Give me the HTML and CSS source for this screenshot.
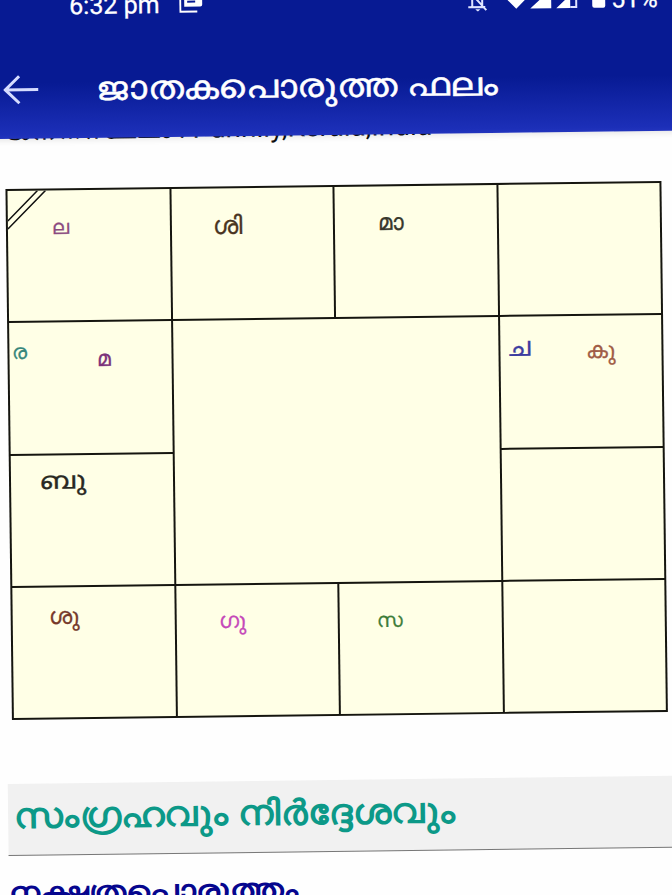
FILE: index.html
```
<!DOCTYPE html>
<html lang="ml">
<head>
<meta charset="utf-8">
<title>ജാതകപൊരുത്ത ഫലം</title>
<link rel="stylesheet" href="styles.css">
</head>
<body>
<div class="screen">
  <header class="appbar">
    <div class="status">
      <span class="clock">6:32 pm</span>
      <svg class="copy" width="24" height="24" viewBox="0 0 24 24"><path d="M1 4v18h17" fill="none" stroke="#fff" stroke-width="2"/><path fill="#fff" d="M5 0h18v15q0 2-2 2H5z"/><path d="M8 7h12M8 12h8" stroke="#071a93" stroke-width="2"/></svg>
      <svg class="bell" width="22" height="24" viewBox="0 0 22 24"><path d="M5 17V9q0-4 5-5 5 1 5 5v8M1 18h17M2 2l17 19" fill="none" stroke="#dfe4ff" stroke-width="2"/><path fill="#dfe4ff" d="M8 20h5l-2 2h-1z"/></svg>
      <svg class="signal" width="100" height="24" viewBox="0 0 100 24"><path fill="#fff" d="M0 10h18l-9 9zM23 19 44 0v19zM49 19 63 6v13zM85 0h13v17q0 2-2 2H87q-2 0-2-2z"/><path d="M63 18h6V0" fill="none" stroke="#dfe4ff" stroke-width="2"/></svg>
      <span class="level">51%</span>
    </div>
    <div class="bar">
      <svg class="back" width="36" height="30" viewBox="0 0 36 30"><path d="M35 15H2M16 1.500 2 15l14 13.500" fill="none" stroke="#d5dcff" stroke-width="3"/></svg>
      <h1 class="title"><span class="wide">ജാതകപൊ<span class="open">രു</span>ത്ത ഫലം</span></h1>
    </div>
  </header>
  <main class="page">
    <div class="clip"><p class="place">ജനനസ്ഥലം : Punnily,Kerala,India</p></div>
    <section class="chart">
      <div class="cell"><svg class="corner" width="40" height="40" viewBox="0 0 40 40"><path d="M0 30 30 0M0 38 38 0" fill="none" stroke="#111" stroke-width="1.500"/></svg><span class="g la">ല</span></div>
      <div class="cell"><span class="g shi">ശി</span></div>
      <div class="cell"><span class="g maa">മാ</span></div>
      <div class="cell"></div>
      <div class="cell"><span class="g ra">ര</span><span class="g ma">മ</span></div>
      <div class="cell center"></div>
      <div class="cell"><span class="g cha">ച</span><span class="g ku">കു</span></div>
      <div class="cell"><span class="g bu">ബു</span></div>
      <div class="cell"></div>
      <div class="cell"><span class="g shu">ശു</span></div>
      <div class="cell"><span class="g gu">ഗു</span></div>
      <div class="cell"><span class="g sa">സ</span></div>
      <div class="cell"></div>
    </section>
    <h2 class="summary"><span class="wide">സംഗ്രഹ<span class="open">വും</span> നിർദ്ദേശ<span class="open">വും</span></span></h2>
    <h3 class="match"><span class="wide">നക്ഷത്രപൊ<span class="open">രു</span>ത്തം</span></h3>
  </main>
</div>
</body>
</html>
```
FILE: styles.css
```
* { box-sizing: border-box; margin: 0; padding: 0; }
html, body { width: 672px; height: 895px; overflow: hidden; background: #fefefe; }
body { font-family: "Noto Sans", sans-serif; }
svg { display: block; flex: none; }
.screen { width: 700px; height: 925px; margin-left: -12px; transform: rotate(-0.7deg); transform-origin: 12px 0; }
.screen::before { content: ""; display: block; height: 12px; margin-top: -12px; background: #071a93; }
.appbar { height: 140px; margin-top: -1px; padding: 1px 0 0 12px; background: linear-gradient(#071a93 60%, #1c2fb8 97%, #2234bd); box-shadow: 0 1px 7px rgba(0,0,0,.12); position: relative; z-index: 1; }
.status { display: flex; height: 40px; align-items: flex-start; font-family: Roboto, sans-serif; color: #fff; white-space: nowrap; }
.clock { font-size: 25px; line-height: 30px; margin: -8px 0 0 69px; width: 92px; -webkit-text-stroke: .3px #fff; }
.copy { margin: -8px 0 0 18px; }
.bell { margin: -5px 0 0 264px; }
.signal { margin: -4px 0 0 18px; }
.level { font-size: 25px; line-height: 30px; margin: -8px 0 0 4px; -webkit-text-stroke: .3px #fff; }
.bar { display: flex; height: 99px; align-items: flex-start; }
.back { margin: 35px 0 0 2px; }
.wide { display: inline-block; transform-origin: 0 0; }
.open { font-feature-settings: "blws" 0, "psts" 0; }
.title { margin: 24px 0 0 57px; font-size: 33px; line-height: 50px; font-weight: 400; color: #fff; white-space: nowrap; -webkit-text-stroke: .5px #fff; }
.title .wide { transform: scaleX(1.14); }
.page { padding-left: 12px; }
.clip { height: 50px; }
.place { font: 28px/24px Roboto, "Noto Sans", sans-serif; color: #111; margin: 0 0 0 4px; transform: translateY(-20px); white-space: nowrap; }
.chart { width: 656px; height: 531px; margin-left: 3px; display: grid; grid-template-columns: repeat(4, 1fr); grid-template-rows: repeat(4, 1fr); gap: 2px; padding: 2px; background: #15150f; }
.cell { display: grid; grid-template: 100% / 100%; align-items: start; justify-items: start; background: #ffffe6; min-width: 0; min-height: 0; }
.cell > * { grid-area: 1 / 1; }
.center { grid-area: 2 / 2 / 4 / 4; }
.g { line-height: 30px; white-space: nowrap; font-feature-settings: "blws" 0, "psts" 0; -webkit-text-stroke: .3px currentColor; }
.la { font-size: 20px; margin: 22px 0 0 44px; color: #8b4a80; }
.shi { font-size: 25px; margin: 21px 0 0 41px; color: #49341f; }
.maa { font-size: 23px; margin: 20px 0 0 43px; color: #38382c; }
.ra { font-size: 21px; margin: 13px 0 0 2px; color: #37877c; }
.ma { font-size: 22px; margin: 20px 0 0 87px; color: #7b327a; }
.cha { font-size: 27px; margin: 14px 0 0 7px; color: #3d3da0; }
.ku { font-size: 23px; margin: 18px 0 0 86px; color: #a05c45; }
.bu { font-size: 24px; margin: 9px 0 0 28px; color: #292922; transform: scaleX(1.25); transform-origin: 0 0; }
.shu { font-size: 23px; margin: 13px 0 0 36px; color: #76392b; }
.gu { font-size: 22px; margin: 19px 0 0 43px; color: #c548b9; }
.sa { font-size: 20px; margin: 22px 0 0 37px; color: #3c7c37; }
.summary { height: 72px; margin: 64px 0 0 -2px; padding-left: 6px; font-size: 35px; line-height: 62px; color: #0c9988; background: #f1f1f1; border-bottom: 1px solid #777; white-space: nowrap; }
.summary .wide { transform: scaleX(1.088); }
.match { margin: 13px 0 0 -2px; font-size: 28px; line-height: 44px; color: #06068e; white-space: nowrap; }
.match .wide { transform: scaleX(1.195); }
```
